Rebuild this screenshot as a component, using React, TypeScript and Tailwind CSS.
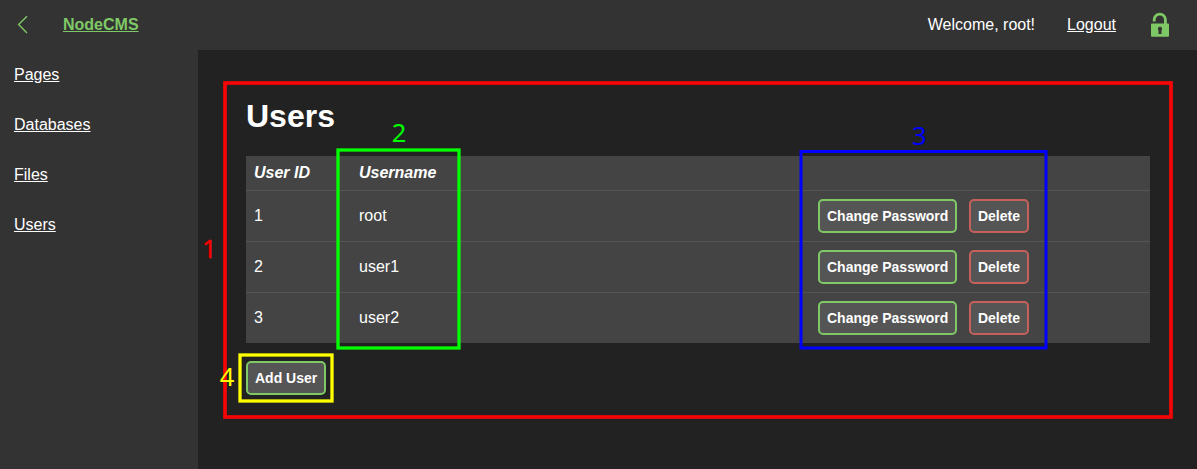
import React from "react";

type User = { id: number; name: string };

const users: User[] = [
  { id: 1, name: "root" },
  { id: 2, name: "user1" },
  { id: 3, name: "user2" },
];

const navItems = ["Pages", "Databases", "Files", "Users"];

function Button({ label, danger = false }: { label: string; danger?: boolean }) {
  return (
    <button
      className={`h-[34px] rounded-[5px] border-2 bg-[#555555] px-[7px] text-[14px] font-bold leading-4 whitespace-nowrap ${
        danger ? "border-[#c5605a]" : "border-[#7fc866]"
      }`}
    >
      {label}
    </button>
  );
}

function Header() {
  return (
    <header className="flex h-[50px] shrink-0 items-center bg-[#333333]">
      <svg className="ml-[17px] h-5 w-3" viewBox="0 0 12 20" fill="none" stroke="#7fc866" strokeWidth="1.4">
        <path d="M10 1.2 1.6 9.6 10 18" />
      </svg>
      <a className="ml-[34px] font-bold leading-[18px] text-[#7fc866] underline" href="#">
        NodeCMS
      </a>
      <span className="ml-auto leading-[18px]">Welcome, root!</span>
      <a className="ml-8 leading-[18px] underline" href="#">
        Logout
      </a>
      <svg className="mr-7 ml-[35px] h-[26px] w-[18px]" viewBox="0 0 18 26">
        <path d="M3.2 9.6V7.8a5.6 5.6 0 0 1 11.2 0V13" fill="none" stroke="#7fc866" strokeWidth="2.8" />
        <path
          fill="#7fc866"
          fillRule="evenodd"
          d="M1 11.6h16q1 0 1 1v11.2q0 1-1 1H1q-1 0-1-1V12.6q0-1 1-1ZM9 14.8a2.1 2.1 0 0 0-1.5 3.6V22h3v-3.6A2.1 2.1 0 0 0 9 14.8Z"
        />
      </svg>
    </header>
  );
}

function Annotations() {
  return (
    <svg
      className="pointer-events-none absolute inset-0 h-[469px] w-[1197px] font-['Noto_Sans',sans-serif] text-[25.5px]"
      viewBox="0 0 1197 469"
      fill="none"
    >
      <rect x="225" y="83" width="946" height="334" stroke="#f50505" strokeWidth="3.7" />
      <rect x="338" y="150" width="121" height="198" stroke="#00ff00" strokeWidth="3.3" />
      <rect x="801" y="151.5" width="245" height="196.5" stroke="#0000ff" strokeWidth="3" />
      <rect x="240" y="355" width="92" height="46" stroke="#ffff00" strokeWidth="3.3" />
      <text x="202" y="258" fill="#ff0000" stroke="#ff0000" strokeWidth="0.3">1</text>
      <text x="391.8" y="142" fill="#00ff00">2</text>
      <text x="912" y="145" fill="#0000ff">3</text>
      <text x="219.7" y="386" fill="#ffff00">4</text>
    </svg>
  );
}

export default function App() {
  return (
    <div className="relative flex h-[469px] w-[1197px] flex-col overflow-hidden bg-[#222222] font-['Liberation_Sans',Arial,sans-serif] text-[16px] text-white">
      <Header />
      <div className="flex flex-1">
        <nav className="flex w-[198px] shrink-0 flex-col bg-[#333333] pl-[14px]">
          {navItems.map((item) => (
            <a key={item} href="#" className="h-[50px] leading-[50px] underline">
              {item}
            </a>
          ))}
        </nav>
        <main className="flex-1 pt-[48px] pr-[47px] pl-12">
          <h1 className="h-[58px] text-[32px] leading-[37px] font-bold">Users</h1>
          <table className="w-full table-fixed border-separate border-spacing-0 bg-[#444444] text-left">
            <colgroup>
              <col className="w-[105px]" />
              <col className="w-[459px]" />
              <col />
            </colgroup>
            <thead>
              <tr className="h-[35px] italic [&>th]:border-b [&>th]:border-[#555555]">
                <th className="px-2 py-0 leading-[18px]">User ID</th>
                <th className="px-2 py-0 leading-[18px]">Username</th>
                <th />
              </tr>
            </thead>
            <tbody>
              {users.map((user) => (
                <tr
                  key={user.id}
                  className="h-[51px] last:h-[50px] [&>td]:border-b [&>td]:border-[#555555] last:[&>td]:border-b-0"
                >
                  <td className="px-2 py-0 leading-[18px]">{user.id}</td>
                  <td className="px-2 py-0 leading-[18px]">{user.name}</td>
                  <td className="py-0 pl-2">
                    <div className="flex gap-[11.6px]">
                      <Button label="Change Password" />
                      <Button label="Delete" danger />
                    </div>
                  </td>
                </tr>
              ))}
            </tbody>
          </table>
          <div className="mt-[18px] flex">
            <Button label="Add User" />
          </div>
        </main>
      </div>
      <Annotations />
    </div>
  );
}
